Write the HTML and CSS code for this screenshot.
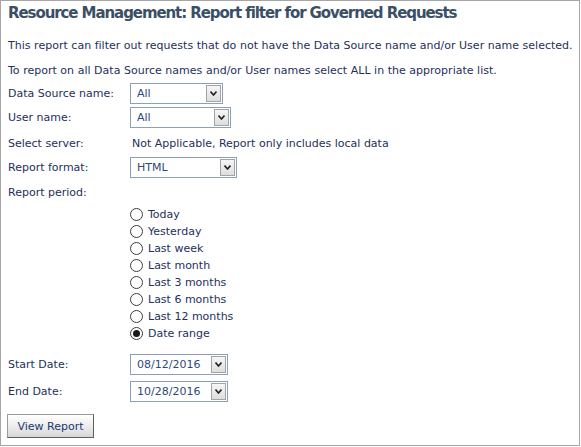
FILE: index.html
```html
<!DOCTYPE html>
<html lang="en">
<head>
<meta charset="utf-8">
<title>Resource Management: Report filter for Governed Requests</title>
<link rel="stylesheet" href="styles.css">
</head>
<body>
<div class="page">
  <h1 class="title">Resource Management: Report filter for Governed Requests</h1>
  <p class="note first">This report can filter out requests that do not have the Data Source name and/or User name selected.</p>
  <p class="note second">To report on all Data Source names and/or User names select ALL in the appropriate list.</p>

  <div class="row row-ds">
    <span class="label">Data Source name:</span>
    <div class="select w-ds"><span class="val">All</span><span class="arrow"><svg width="7" height="5" viewBox="0 0 7 5"><path d="M0.5 0.5 L3.5 4 L6.5 0.5" fill="none" stroke="#222" stroke-width="1.6"/></svg></span></div>
  </div>
  <div class="row row-user">
    <span class="label">User name:</span>
    <div class="select w-user"><span class="val">All</span><span class="arrow"><svg width="7" height="5" viewBox="0 0 7 5"><path d="M0.5 0.5 L3.5 4 L6.5 0.5" fill="none" stroke="#222" stroke-width="1.6"/></svg></span></div>
  </div>
  <div class="row row-server">
    <span class="label">Select server:</span>
    <span class="plain">Not Applicable, Report only includes local data</span>
  </div>
  <div class="row row-format">
    <span class="label">Report format:</span>
    <div class="select w-format"><span class="val">HTML</span><span class="arrow"><svg width="7" height="5" viewBox="0 0 7 5"><path d="M0.5 0.5 L3.5 4 L6.5 0.5" fill="none" stroke="#222" stroke-width="1.6"/></svg></span></div>
  </div>
  <div class="row row-period">
    <span class="label">Report period:</span>
  </div>
  <ul class="radios">
    <li><span class="radio"></span>Today</li>
    <li><span class="radio"></span>Yesterday</li>
    <li><span class="radio"></span>Last week</li>
    <li><span class="radio"></span>Last month</li>
    <li><span class="radio"></span>Last 3 months</li>
    <li><span class="radio"></span>Last 6 months</li>
    <li><span class="radio"></span>Last 12 months</li>
    <li><span class="radio checked"></span>Date range</li>
  </ul>
  <div class="row row-start">
    <span class="label">Start Date:</span>
    <div class="select w-date"><span class="val">08/12/2016</span><span class="arrow"><svg width="7" height="5" viewBox="0 0 7 5"><path d="M0.5 0.5 L3.5 4 L6.5 0.5" fill="none" stroke="#222" stroke-width="1.6"/></svg></span></div>
  </div>
  <div class="row row-end">
    <span class="label">End Date:</span>
    <div class="select w-date"><span class="val">10/28/2016</span><span class="arrow"><svg width="7" height="5" viewBox="0 0 7 5"><path d="M0.5 0.5 L3.5 4 L6.5 0.5" fill="none" stroke="#222" stroke-width="1.6"/></svg></span></div>
  </div>
  <button class="btn" type="button">View Report</button>
</div>
</body>
</html>
```

FILE: styles.css
```css
html, body {
  margin: 0;
  padding: 0;
  background: #ffffff;
}

.page {
  box-sizing: border-box;
  width: 580px;
  height: 446px;
  border: 1px solid #a6a6a6;
  padding: 2px 6px 0 7px;
  font-family: "DejaVu Sans", sans-serif;
  font-size: 11px;
  color: #24305a;
  overflow: hidden;
}

.title {
  margin: 0;
  font-size: 15px;
  font-weight: bold;
  line-height: 20px;
  color: #3a4f66;
  letter-spacing: -1.08px;
  white-space: nowrap;
}

.note {
  margin: 0;
  line-height: 16px;
  white-space: nowrap;
  letter-spacing: 0.02px;
}

.first { margin-top: 15px; }
.second { margin-top: 9px; }

.row {
  display: grid;
  grid-template-columns: 122px auto;
  align-items: center;
  min-height: 16px;
}

.label { line-height: 16px; }

.row-ds { margin-top: 4px; }
.row-user { margin-top: 3px; }
.row-server { margin-top: 8px; }
.row-format { margin-top: 5px; }
.row-period { margin-top: 7px; }
.row-start { margin-top: 12px; }
.row-end { margin-top: 6px; }

.plain {
  padding-left: 2px;
  line-height: 16px;
}

.select {
  box-sizing: border-box;
  height: 21px;
  border: 1px solid #8a9fb8;
  background: #fff;
  display: flex;
  align-items: center;
  justify-content: space-between;
  padding: 1px 1px 1px 6px;
  color: #2f4a7a;
}

.w-ds { width: 93px; }
.w-user { width: 101px; }
.w-format { width: 107px; }
.w-date { width: 98px; }

.val { line-height: 16px; }

.arrow {
  box-sizing: border-box;
  width: 15px;
  height: 17px;
  border: 1px solid #a3a3a3;
  background: linear-gradient(#f6f6f6, #dedede);
  display: flex;
  align-items: center;
  justify-content: center;
}

.radios {
  list-style: none;
  margin: 5px 0 0 0;
  padding: 0 0 0 122px;
}

.radios li {
  height: 17px;
  display: flex;
  align-items: center;
  line-height: 17px;
}

.radio {
  box-sizing: border-box;
  width: 13px;
  height: 13px;
  border: 1px solid #3c3c3c;
  border-radius: 50%;
  margin-right: 5px;
  background: #fff;
  display: flex;
  align-items: center;
  justify-content: center;
}

.radio.checked::after {
  content: "";
  width: 7px;
  height: 7px;
  border-radius: 50%;
  background: #1a1a1a;
}

.btn {
  display: block;
  box-sizing: border-box;
  margin: 12px 0 0 -1px;
  width: 87px;
  height: 24px;
  padding: 0;
  font-family: "DejaVu Sans", sans-serif;
  font-size: 11px;
  color: #1c3a6e;
  background: linear-gradient(#ffffff, #e9e9e9 60%, #d6d6d6);
  border: 1px solid #9a9a9a;
  border-right-color: #5e5e5e;
  border-bottom-color: #5e5e5e;
  border-radius: 0;
}
```
